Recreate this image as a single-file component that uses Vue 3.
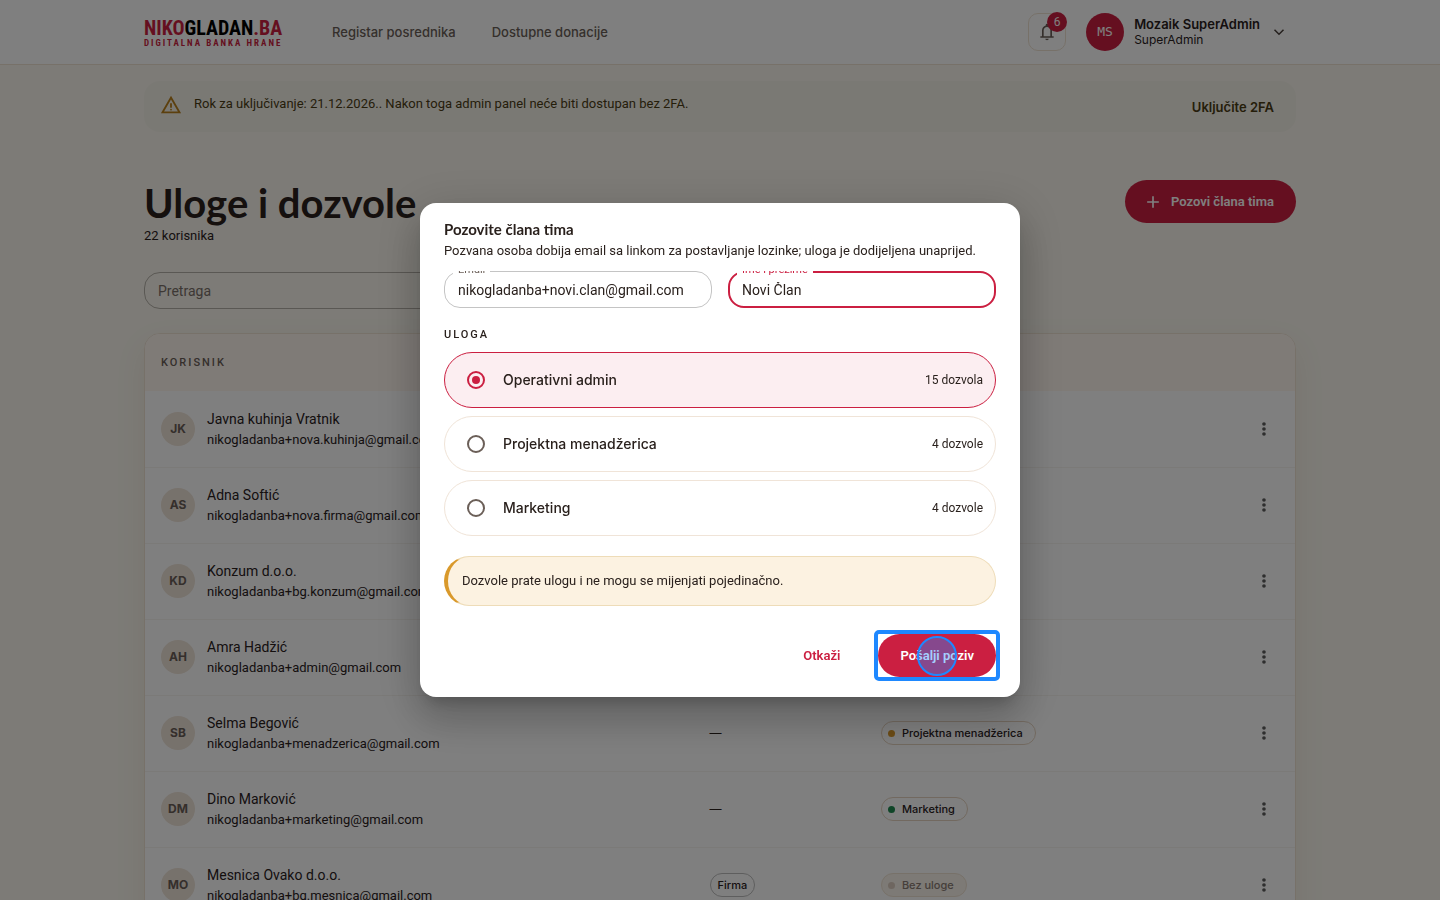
<template>
  <div class="page">
    <header class="topbar">
      <div class="container topbar-inner">
        <a href="#" class="logo" aria-label="Nikogladan.ba">
          <span class="logo-name">NIKO<span class="logo-dark">GLADAN</span>.BA</span>
          <span class="logo-tagline">DIGITALNA BANKA HRANE</span>
        </a>
        <nav class="nav">
          <a href="#">Registar posrednika</a>
          <a href="#">Dostupne donacije</a>
        </nav>
        <div class="account">
          <button type="button" class="bell" aria-label="Obavijesti">
            <svg viewBox="0 0 24 24" width="20" height="20">
              <path
                fill="currentColor"
                d="M4 19v-2h2v-7q0-2.08 1.25-3.7T10.5 4.2v-.7q0-.62.44-1.06T12 2t1.06.44.44 1.06v.7q2 .5 3.25 2.1T18 10v7h2v2zm8 3q-.82 0-1.41-.59T10 20h4q0 .83-.59 1.41T12 22m-4-5h8v-7q0-1.65-1.17-2.82T12 6 9.18 7.18 8 10z"
              />
            </svg>
            <span class="bell-badge">6</span>
          </button>
          <button type="button" class="user">
            <span class="user-avatar">MS</span>
            <span class="user-text">
              <span class="user-name">Mozaik SuperAdmin</span>
              <span class="user-role">SuperAdmin</span>
            </span>
            <svg viewBox="0 0 24 24" width="18" height="18">
              <path d="M6 9l6 6 6-6" fill="none" stroke="#4a403b" stroke-width="2" />
            </svg>
          </button>
        </div>
      </div>
    </header>

    <main class="container">
      <div class="banner">
        <svg class="banner-icon" viewBox="0 0 24 24" width="22" height="22">
          <path
            fill="currentColor"
            d="M1 21 12 2l11 19zm3.45-2h15.1L12 6zM12 18q.42 0 .71-.29T13 17t-.29-.71T12 16t-.71.29T11 17t.29.71.71.29m-1-3h2v-5h-2z"
          />
        </svg>
        <p>Rok za uključivanje: 21.12.2026.. Nakon toga admin panel neće biti dostupan bez 2FA.</p>
        <button type="button" class="banner-button">Uključite 2FA</button>
      </div>

      <div class="heading">
        <div>
          <h1>Uloge i dozvole</h1>
          <p>22 korisnika</p>
        </div>
        <button type="button" class="button button-primary button-icon" @click="open = true">
          <svg viewBox="0 0 24 24" width="20" height="20">
            <path d="M12 5v14M5 12h14" fill="none" stroke="currentColor" stroke-width="2" />
          </svg>
          Pozovi člana tima
        </button>
      </div>

      <input v-model="search" type="search" class="search" placeholder="Pretraga" aria-label="Pretraga" />

      <div class="card">
        <table>
          <thead>
            <tr>
              <th class="col-user">Korisnik</th>
              <th class="col-type">Tip</th>
              <th>Uloga</th>
              <th class="col-menu"></th>
            </tr>
          </thead>
          <tbody>
            <tr v-for="user in filteredUsers" :key="user.email">
              <td>
                <div class="person">
                  <span class="person-avatar">{{ user.initials }}</span>
                  <div>
                    <div class="person-name">{{ user.name }}</div>
                    <div class="person-email">{{ user.email }}</div>
                  </div>
                </div>
              </td>
              <td>
                <span v-if="user.type" class="chip chip-type">{{ user.type }}</span>
                <span v-else class="dash">—</span>
              </td>
              <td>
                <span class="chip" :class="'chip-' + user.tone">
                  <span class="chip-dot"></span>{{ user.role }}
                </span>
              </td>
              <td class="col-menu">
                <button type="button" class="menu" :aria-label="'Opcije: ' + user.name">
                  <svg viewBox="0 0 24 24" width="20" height="20">
                    <g fill="currentColor">
                      <circle cx="12" cy="6" r="2.2" />
                      <circle cx="12" cy="12" r="2.2" />
                      <circle cx="12" cy="18" r="2.2" />
                    </g>
                  </svg>
                </button>
              </td>
            </tr>
          </tbody>
        </table>
      </div>
    </main>

    <div v-if="open" class="overlay">
      <form
        class="dialog"
        role="dialog"
        aria-modal="true"
        aria-labelledby="invite-title"
        @submit.prevent="open = false"
      >
        <h2 id="invite-title">Pozovite člana tima</h2>
        <p class="dialog-lead">
          Pozvana osoba dobija email sa linkom za postavljanje lozinke; uloga je dodijeljena unaprijed.
        </p>

        <div class="fields">
          <div class="field">
            <label for="invite-email">Email</label>
            <input id="invite-email" v-model="email" type="email" />
          </div>
          <div class="field field-active">
            <label for="invite-name">Ime i prezime</label>
            <input id="invite-name" v-model="fullName" type="text" />
          </div>
        </div>

        <fieldset class="roles">
          <legend>Uloga</legend>
          <label
            v-for="role in roles"
            :key="role.name"
            class="role"
            :class="{ 'role-selected': selectedRole === role.name }"
          >
            <input v-model="selectedRole" type="radio" name="role" :value="role.name" />
            <span class="role-name">{{ role.name }}</span>
            <span class="role-count">{{ role.count }}</span>
          </label>
        </fieldset>

        <p class="note">Dozvole prate ulogu i ne mogu se mijenjati pojedinačno.</p>

        <div class="actions">
          <button type="button" class="button button-text" @click="open = false">Otkaži</button>
          <div class="target">
            <button type="submit" class="button button-primary">Pošalji poziv</button>
            <span class="target-pointer"></span>
          </div>
        </div>
      </form>
    </div>
  </div>
</template>

<script setup>
import { computed, ref } from "vue";

const open = ref(true);
const search = ref("");
const email = ref("nikogladanba+novi.clan@gmail.com");
const fullName = ref("Novi Član");
const selectedRole = ref("Operativni admin");

const roles = [
  { name: "Operativni admin", count: "15 dozvola" },
  { name: "Projektna menadžerica", count: "4 dozvole" },
  { name: "Marketing", count: "4 dozvole" },
];

const users = [
  { initials: "JK", name: "Javna kuhinja Vratnik", email: "nikogladanba+nova.kuhinja@gmail.com", type: "Kuhinja", role: "Bez uloge", tone: "none" },
  { initials: "AS", name: "Adna Softić", email: "nikogladanba+nova.firma@gmail.com", type: "Firma", role: "Bez uloge", tone: "none" },
  { initials: "KD", name: "Konzum d.o.o.", email: "nikogladanba+bg.konzum@gmail.com", type: "Firma", role: "Bez uloge", tone: "none" },
  { initials: "AH", name: "Amra Hadžić", email: "nikogladanba+admin@gmail.com", type: "", role: "Operativni admin", tone: "red" },
  { initials: "SB", name: "Selma Begović", email: "nikogladanba+menadzerica@gmail.com", type: "", role: "Projektna menadžerica", tone: "amber" },
  { initials: "DM", name: "Dino Marković", email: "nikogladanba+marketing@gmail.com", type: "", role: "Marketing", tone: "green" },
  { initials: "MO", name: "Mesnica Ovako d.o.o.", email: "nikogladanba+bg.mesnica@gmail.com", type: "Firma", role: "Bez uloge", tone: "none" },
];

const filteredUsers = computed(() => {
  const term = search.value.trim().toLowerCase();
  return users.filter((user) => (user.name + user.email).toLowerCase().includes(term));
});
</script>

<style>
body {
  background: #faf7ee;
  overflow: hidden;
}
</style>

<style scoped>
.page {
  color: #2a211d;
  font-family: Roboto, "Liberation Sans", sans-serif;
  font-size: 13px;
  line-height: 20px;
}

.page *,
.page *::before {
  box-sizing: border-box;
}

button,
input {
  font: inherit;
  color: inherit;
}

button {
  border: none;
  background: none;
  padding: 0;
  cursor: pointer;
}

h1,
h2,
p {
  margin: 0;
}

.container {
  width: calc(100% - 48px);
  max-width: 1152px;
  margin: 0 auto;
}

.topbar {
  background: #fff;
  border-bottom: 1px solid #efe3d3;
}

.topbar-inner {
  display: flex;
  align-items: center;
  height: 64px;
}

.logo {
  display: flex;
  flex-direction: column;
  width: 136px;
  color: #cb1f41;
  font-family: "Roboto Condensed", Roboto, sans-serif;
  font-weight: 700;
  text-decoration: none;
  white-space: nowrap;
}

.logo-name {
  font-size: 20px;
  line-height: 22px;
}

.logo-dark {
  color: #000;
}

.logo-tagline {
  font-size: 9px;
  line-height: 8px;
  letter-spacing: 2px;
}

.nav {
  display: flex;
  gap: 36px;
  margin-left: 52px;
}

.nav a {
  color: #6b5f58;
  font-family: Inter, sans-serif;
  font-weight: 500;
  text-decoration: none;
}

.account {
  display: flex;
  align-items: center;
  gap: 20px;
  margin-left: auto;
  margin-right: 8px;
}

.bell {
  position: relative;
  display: grid;
  place-items: center;
  width: 38px;
  height: 38px;
  border: 1px solid #efe3d3;
  border-radius: 10px;
  color: #6b5f58;
}

.bell-badge {
  position: absolute;
  top: -2px;
  right: -2px;
  width: 20px;
  height: 20px;
  border-radius: 10px;
  background: #cb1f41;
  color: #fff;
  font-size: 12px;
}

.user {
  display: flex;
  align-items: center;
  gap: 10px;
  text-align: left;
}

.user-avatar {
  width: 38px;
  height: 38px;
  border-radius: 50%;
  background: #cb1f41;
  color: #fff;
  font-family: "DejaVu Sans Mono", monospace;
  line-height: 38px;
  text-align: center;
}

.user-text {
  display: flex;
  flex-direction: column;
  font-family: Inter, sans-serif;
  line-height: 16px;
}

.user-name {
  font-weight: 600;
}

.user-role {
  font-size: 12px;
}

.banner {
  display: flex;
  align-items: flex-start;
  gap: 12px;
  margin-top: 16px;
  padding: 13px 22px 13px 16px;
  min-height: 51px;
  border-radius: 16px;
  background: #f5f2e9;
  color: #4a3c14;
}

.banner-icon {
  color: #b9801c;
}

.banner-button {
  align-self: center;
  margin-left: auto;
  font-family: Inter, sans-serif;
  font-weight: 600;
}

.heading {
  display: flex;
  align-items: flex-start;
  justify-content: space-between;
  margin-top: 48px;
}

h1 {
  font-family: Lato, sans-serif;
  font-size: 40px;
  font-weight: 700;
  line-height: 46px;
}

.button {
  display: inline-flex;
  align-items: center;
  justify-content: center;
  gap: 8px;
  height: 43px;
  padding: 0 22px;
  border-radius: 22px;
  font-weight: 600;
}

.button-primary {
  background: #cb1f41;
  color: #fff;
}

.button-icon {
  padding-left: 18px;
}

.button-text {
  color: #cb1f41;
}

.search {
  display: block;
  width: 100%;
  max-width: 480px;
  height: 37px;
  margin-top: 26px;
  padding: 0 13px;
  border: 1px solid #b5b0a8;
  border-radius: 16px;
  outline: none;
  background: none;
  font-size: 14px;
}

.search::placeholder {
  color: #7b706a;
}

.card {
  margin-top: 24px;
  overflow: hidden;
  border: 1px solid #efe3d3;
  border-radius: 16px;
  background: #fff;
  box-shadow: 0 12px 32px rgba(120, 60, 20, 0.08);
}

table {
  width: 100%;
  border-collapse: collapse;
  table-layout: fixed;
}

th {
  height: 57px;
  padding: 0 16px;
  background: #fff6ef;
  color: #6b5f58;
  font-size: 11px;
  font-weight: 500;
  letter-spacing: 2px;
  text-align: left;
  text-transform: uppercase;
}

td {
  height: 76px;
  padding: 0 16px;
  border-bottom: 1px solid #f7f4f0;
}

.col-user {
  width: 47.7%;
}

.col-type {
  width: 14.9%;
}

.col-menu {
  width: 62px;
}

.person {
  display: flex;
  align-items: center;
  gap: 12px;
}

.person-avatar {
  width: 34px;
  height: 34px;
  border-radius: 50%;
  background: #efe4d8;
  color: #6b5f58;
  font-family: Inter, sans-serif;
  font-size: 12px;
  font-weight: 700;
  line-height: 34px;
  text-align: center;
}

.person-name {
  font-size: 14px;
  line-height: 22px;
}

.dash {
  font-family: Inter, sans-serif;
  font-size: 12px;
}

.chip {
  display: inline-flex;
  align-items: center;
  gap: 7px;
  height: 24px;
  padding: 0 12px 0 6px;
  border: 1px solid #e5d3c0;
  border-radius: 12px;
  font-family: Inter, sans-serif;
  font-size: 11px;
  font-weight: 500;
}

.chip-type {
  padding: 0 7px;
  border-color: #bdbdbd;
}

.chip-dot {
  width: 7px;
  height: 7px;
  border-radius: 50%;
  background: #cb1f41;
}

.chip-amber .chip-dot {
  background: #d9992b;
}

.chip-green .chip-dot {
  background: #1f8a50;
}

.chip-none {
  border-color: #efe3d3;
  background: #faf4ec;
  color: #8a7d75;
}

.chip-none .chip-dot {
  background: #dccdc0;
}

.menu {
  display: block;
  height: 20px;
  margin: 0 auto;
  color: #5c5c5c;
}

.menu svg {
  display: block;
}

.overlay {
  position: fixed;
  inset: 0;
  display: flex;
  align-items: center;
  justify-content: center;
  background: rgba(0, 0, 0, 0.5);
}

.dialog {
  width: 600px;
  max-width: calc(100% - 64px);
  padding: 16px 24px 20px;
  border-radius: 16px;
  background: #fff;
  box-shadow:
    0 11px 15px -7px rgba(0, 0, 0, 0.2),
    0 24px 38px 3px rgba(0, 0, 0, 0.14),
    0 9px 46px 8px rgba(0, 0, 0, 0.12);
}

h2 {
  font-family: Lato, sans-serif;
  font-size: 15px;
  font-weight: 700;
  line-height: 20px;
}

.dialog-lead {
  margin-top: 2px;
}

.fields {
  display: grid;
  grid-template-columns: 1fr 1fr;
  gap: 16px;
  margin-top: 10px;
  overflow: hidden;
}

.field {
  position: relative;
}

.field label {
  position: absolute;
  top: -7px;
  left: 9px;
  padding: 0 5px;
  background: #fff;
  color: #6b5f58;
  font-size: 11px;
  line-height: 12px;
}

.field input {
  display: block;
  width: 100%;
  height: 37px;
  padding: 0 13px;
  border: 1px solid #c4c4c4;
  border-radius: 16px;
  outline: none;
  background: #fff;
  font-size: 14px;
}

.field-active label {
  color: #cb1f41;
}

.field-active input {
  padding: 0 12px;
  border: 2px solid #cb1f41;
}

.roles {
  display: flex;
  flex-direction: column;
  gap: 8px;
  min-width: 0;
  margin: 20px 0 0;
  padding: 0;
  border: none;
}

.roles legend {
  padding: 0 0 10px;
  font-size: 11px;
  font-weight: 500;
  line-height: 14px;
  letter-spacing: 2px;
  text-transform: uppercase;
}

.role {
  display: flex;
  align-items: center;
  height: 56px;
  padding: 0 12px 0 22px;
  border: 1px solid #f0e4d8;
  border-radius: 28px;
  cursor: pointer;
}

.role-selected {
  border-color: #cb1f41;
  background: #fceef1;
}

.role input {
  display: grid;
  place-items: center;
  width: 18px;
  height: 18px;
  margin: 0 18px 0 0;
  border: 2px solid #6b5f58;
  border-radius: 50%;
  appearance: none;
}

.role input:checked {
  border-color: #cb1f41;
}

.role input:checked::before {
  content: "";
  width: 8px;
  height: 8px;
  border-radius: 50%;
  background: #cb1f41;
}

.role-name {
  font-family: Inter, sans-serif;
  font-size: 14px;
  font-weight: 500;
}

.role-count {
  margin-left: auto;
  font-size: 12px;
}

.note {
  margin-top: 20px;
  padding: 14px;
  border: 1px solid #eedcb8;
  border-left: 4px solid #d9992b;
  border-radius: 25px;
  background: #fcf2e1;
}

.actions {
  display: flex;
  justify-content: flex-end;
  gap: 16px;
  margin-top: 28px;
}

.target {
  position: relative;
}

/* click marker drawn around the submit button */
.target::after {
  content: "";
  position: absolute;
  inset: -4px;
  border: 4px solid #1e88ff;
  border-radius: 5px;
  pointer-events: none;
}

.target-pointer {
  position: absolute;
  inset: 0;
  width: 40px;
  height: 40px;
  margin: auto;
  border: 2px solid #1e88ff;
  border-radius: 50%;
  background: rgba(30, 136, 255, 0.4);
  pointer-events: none;
}
</style>
